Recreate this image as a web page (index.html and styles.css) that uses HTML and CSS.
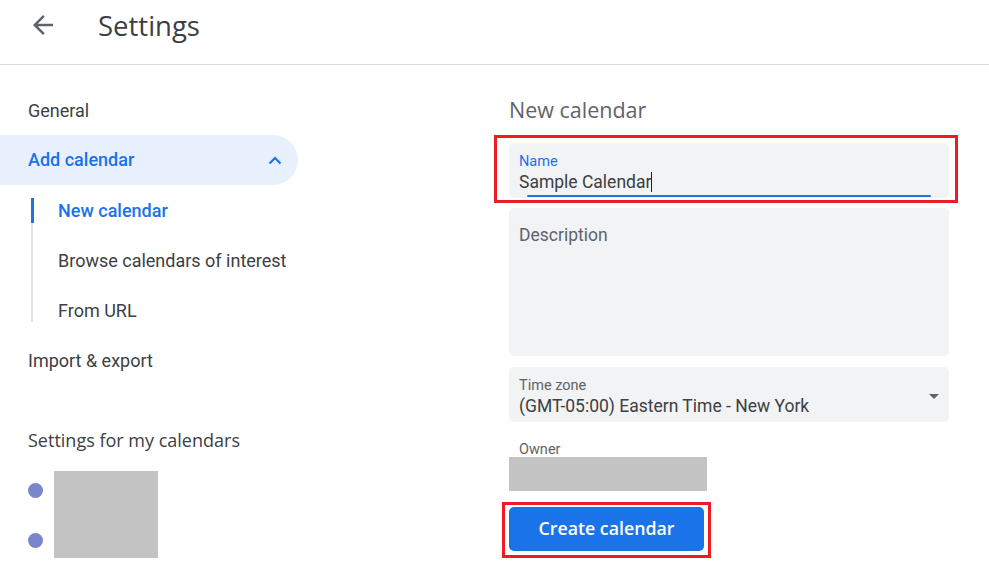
FILE: index.html
```html
<!DOCTYPE html>
<html lang="en">
<head>
<meta charset="utf-8">
<title>Settings</title>
<link rel="stylesheet" href="styles.css">
</head>
<body>
<header class="topbar">
  <span class="back">
    <svg width="30" height="30" viewBox="0 0 24 24"><path d="M20 11H7.83l5.59-5.59L12 4l-8 8 8 8 1.41-1.41L7.83 13H20v-2z" fill="#5f6368"/></svg>
  </span>
  <h1 class="title">Settings</h1>
</header>
<div class="main">
  <nav class="sidebar">
    <div class="nav-item">General</div>
    <div class="nav-item nav-open">
      <span>Add calendar</span>
      <svg class="chev" width="14" height="9" viewBox="0 0 14 9"><path d="M1.5 7.5L7 2l5.5 5.5" fill="none" stroke="#1a73e8" stroke-width="2.2"/></svg>
    </div>
    <div class="sub-list">
      <div class="sub-item sub-active">New calendar</div>
      <div class="sub-item">Browse calendars of interest</div>
      <div class="sub-item">From URL</div>
    </div>
    <div class="nav-item">Import &amp; export</div>
    <div class="nav-heading">Settings for my calendars</div>
    <div class="my-cals">
      <div class="dots">
        <div class="dot-row"><span class="dot"></span></div>
        <div class="dot-row"><span class="dot"></span></div>
      </div>
      <div class="redact cal-names"></div>
    </div>
  </nav>
  <section class="content">
    <h2 class="heading">New calendar</h2>
    <div class="marked marked-name">
      <div class="field field-name">
        <div class="label label-blue">Name</div>
        <div class="value">Sample Calendar<span class="caret"></span></div>
        <div class="underline"></div>
      </div>
    </div>
    <div class="field field-desc">
      <div class="desc-label">Description</div>
    </div>
    <div class="field field-tz">
      <div class="tz-text">
        <div class="label">Time zone</div>
        <div class="value">(GMT-05:00) Eastern Time - New York</div>
      </div>
      <svg class="drop" width="10" height="5" viewBox="0 0 10 5"><path d="M0 0h10L5 5z" fill="#5f6368"/></svg>
    </div>
    <div class="owner-label">Owner</div>
    <div class="redact owner"></div>
    <div class="marked marked-btn">
      <button class="create">Create calendar</button>
    </div>
  </section>
</div>
</body>
</html>
```

FILE: styles.css
```css
* { box-sizing: border-box; }
html, body { margin: 0; padding: 0; background: #fff; }
body {
  font-family: Roboto, "Liberation Sans", Arial, sans-serif;
  color: #3c4043;
  width: 989px;
  height: 571px;
  overflow: hidden;
}
.topbar {
  height: 65px;
  border-bottom: 1px solid #dadce0;
  display: flex;
  align-items: center;
  padding: 0 0 14px 28px;
}
.back { width: 30px; height: 30px; display: flex; }
.title {
  margin: 0 0 0 40px;
  font-family: "Open Sans", sans-serif;
  font-weight: 400;
  font-size: 27.5px;
  color: #3c4043;
  line-height: 30px;
  position: relative;
  top: 1px;
}
.main { display: flex; }
.sidebar { width: 298px; padding-top: 20px; flex: none; }
.nav-item {
  height: 50px;
  line-height: 52px;
  padding-left: 28px;
  font-size: 18px;
  color: #3c4043;
}
.nav-open {
  background: #e8f0fe;
  border-radius: 0 25px 25px 0;
  color: #1a73e8;
  font-weight: 500;
  display: flex;
  align-items: center;
  justify-content: space-between;
  padding-right: 16px;
}
.chev { display: block; }
.sub-list { position: relative; }
.sub-list::before {
  content: "";
  position: absolute;
  left: 31px;
  top: 13px;
  bottom: 13px;
  width: 2px;
  background: #e3e5e8;
}
.sub-item {
  height: 50px;
  line-height: 52px;
  padding-left: 58px;
  font-size: 18px;
  color: #3c4043;
  position: relative;
}
.sub-active { color: #1a73e8; font-weight: 500; }
.sub-active::before {
  content: "";
  position: absolute;
  left: 31px;
  top: 13px;
  height: 25px;
  width: 3px;
  background: #1a73e8;
}
.nav-heading {
  margin-top: 30px;
  height: 50px;
  line-height: 50px;
  padding-left: 28px;
  font-family: "Open Sans", sans-serif;
  font-weight: 500;
  font-size: 18px;
  color: #3c4043;
}
.my-cals { display: flex; padding-left: 28px; }
.dots { width: 26px; }
.dot-row { height: 50px; display: flex; align-items: center; }
.dot { width: 15px; height: 15px; border-radius: 50%; background: #7986cb; display: block; }
.redact { background: #c3c3c3; }
.cal-names { width: 104px; height: 87px; margin-top: 6px; }

.content { margin-left: 211px; padding-top: 30px; width: 440px; }
.heading {
  margin: 0;
  font-family: "Open Sans", sans-serif;
  font-weight: 400;
  font-size: 21.5px;
  line-height: 30px;
  color: #5f6368;
  padding-left: 0;
}
.marked { position: relative; }
.marked::after {
  content: "";
  position: absolute;
  border: 3.5px solid #ed1c24;
  pointer-events: none;
}
.marked-name { margin-top: 18px; }
.marked-name::after { left: -15px; right: -9px; top: -8px; bottom: -5px; }
.field { background: #f1f3f4; border-radius: 5px; }
.field-name { height: 55px; padding-top: 10px; }
.label { font-size: 14.5px; line-height: 18px; padding-left: 10px; color: #5f6368; }
.label-blue { color: #1a73e8; }
.value { font-size: 17.5px; line-height: 22px; padding-left: 10px; color: #3c4043; display: flex; align-items: center; }
.caret { display: inline-block; width: 1px; height: 20px; background: #202124; margin-left: 0; }
.underline { height: 2px; margin: 2px 18px 0 18px; background: #1a73e8; border-radius: 1px; }
.field-desc { margin-top: 10px; height: 148px; padding: 16px 10px; }
.desc-label { font-size: 17.5px; line-height: 22px; color: #5f6368; }
.field-tz {
  margin-top: 11px;
  height: 55px;
  padding-top: 10px;
  display: flex;
  justify-content: space-between;
}
.drop { margin: 17px 10px 0 0; display: block; }
.owner-label { margin-top: 20px; font-size: 14.5px; line-height: 15px; padding-left: 10px; color: #5f6368; }
.owner { width: 198px; height: 34px; }
.marked-btn { margin-top: 16px; width: 195px; }
.marked-btn::after { left: -7px; right: -7px; top: -5px; bottom: -7px; }
.create {
  display: block;
  width: 195px;
  height: 44px;
  border: 0;
  border-radius: 5px;
  background: #1a73e8;
  color: #fff;
  font-family: "Open Sans", sans-serif;
  font-weight: 600;
  font-size: 17.8px;
  padding: 0 0 2px 0;
}
```
